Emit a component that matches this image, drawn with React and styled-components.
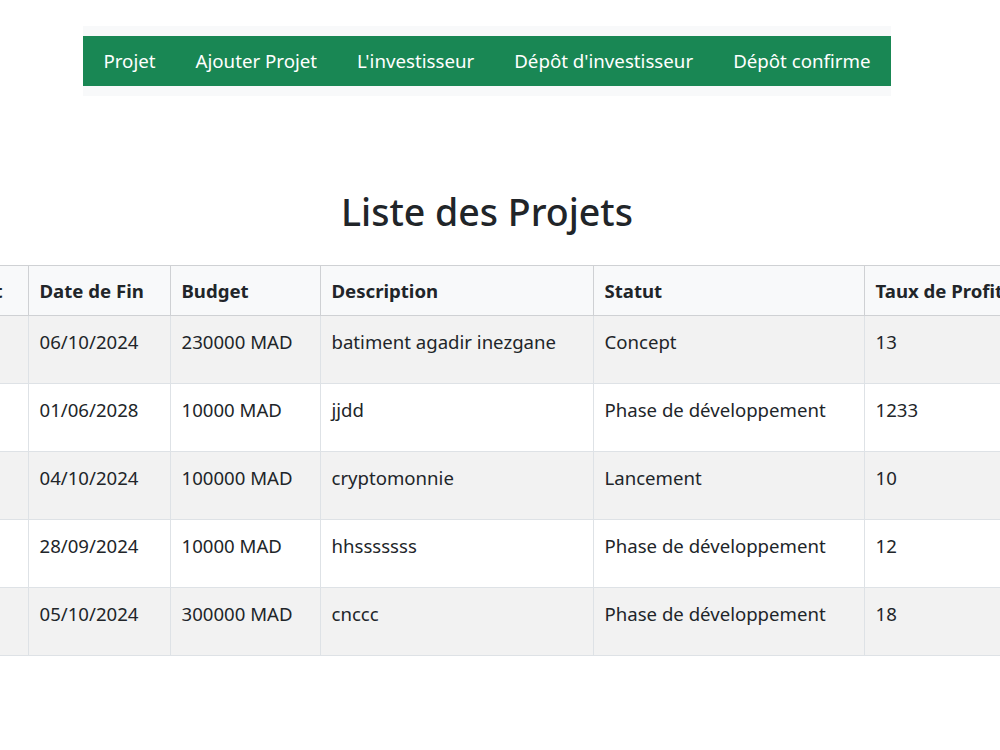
import React from 'react';
import styled, { createGlobalStyle } from 'styled-components';

const GlobalStyle = createGlobalStyle`
  body {
    margin: 0;
    background: #fff;
    font-family: "Noto Sans", "Open Sans", sans-serif;
    color: #212529;
  }
`;

const Page = styled.div`
  width: 1000px;
  overflow: hidden;
  padding-top: 26px;
`;

const NavWrap = styled.nav`
  display: flex;
  justify-content: center;
`;

const NavBar = styled.div`
  background: #f8f9fa;
  padding: 10px 0;
  margin-left: -26px;
`;

const NavList = styled.ul`
  display: flex;
  list-style: none;
  margin: 0;
  padding: 0;
  background: #198754;
  height: 50px;
  align-items: center;
`;

const NavItem = styled.li`
  padding: 0 20px;
  color: #fff;
  font-size: 18.7px;
  line-height: 50px;
  white-space: nowrap;
`;

const Title = styled.h1`
  margin: 88px 0 25px;
  text-align: center;
  font-size: 37.5px;
  font-weight: 500;
  line-height: 56px;
  padding-right: 26px;
`;

const TableWrap = styled.div`
  display: flex;
  justify-content: center;
`;

const Table = styled.table`
  flex: none;
  width: 1558px;
  border-collapse: collapse;
  table-layout: fixed;
  margin-left: -26px;
  font-size: 18.6px;
`;

const Th = styled.th`
  box-sizing: border-box;
  width: ${(p) => p.$w}px;
  height: 50px;
  padding: 0 11px;
  text-align: left;
  font-weight: 700;
  background: #f8f9fa;
  border: 1px solid #cfd1d4;
  white-space: nowrap;
  overflow: hidden;
`;

const Row = styled.tr`
  background: ${(p) => (p.$odd ? '#f2f2f2' : '#fff')};
`;

const Td = styled.td`
  height: 53px;
  padding: 14px 11px 0;
  vertical-align: top;
  line-height: 24px;
  border: 1px solid #dee2e6;
  white-space: nowrap;
  overflow: hidden;
`;

const columns = [
  ['Nom', 150],
  ['Date de Début', 170],
  ['Date de Fin', 142],
  ['Budget', 150],
  ['Description', 273],
  ['Statut', 271],
  ['Taux de Profit', 160],
  ['Actions', 242],
];

const projets = [
  ['agadir', '01/10/2024', '06/10/2024', '230000 MAD', 'batiment agadir inezgane', 'Concept', '13'],
  ['projet', '01/06/2024', '01/06/2028', '10000 MAD', 'jjdd', 'Phase de développement', '1233'],
  ['crypto', '01/10/2024', '04/10/2024', '100000 MAD', 'cryptomonnie', 'Lancement', '10'],
  ['hhs', '20/09/2024', '28/09/2024', '10000 MAD', 'hhsssssss', 'Phase de développement', '12'],
  ['cnc', '01/10/2024', '05/10/2024', '300000 MAD', 'cnccc', 'Phase de développement', '18'],
];

const liens = ['Projet', 'Ajouter Projet', "L'investisseur", "Dépôt d'investisseur", 'Dépôt confirme'];

export default function App() {
  return (
    <Page>
      <GlobalStyle />
      <NavWrap>
        <NavBar>
          <NavList>
            {liens.map((l) => (
              <NavItem key={l}>{l}</NavItem>
            ))}
          </NavList>
        </NavBar>
      </NavWrap>
      <Title>Liste des Projets</Title>
      <TableWrap>
        <Table>
          <thead>
            <tr>
              {columns.map(([name, w]) => (
                <Th key={name} $w={w}>{name}</Th>
              ))}
            </tr>
          </thead>
          <tbody>
            {projets.map((p, i) => (
              <Row key={i} $odd={i % 2 === 0}>
                {p.map((v, j) => (
                  <Td key={j}>{v}</Td>
                ))}
                <Td />
              </Row>
            ))}
          </tbody>
        </Table>
      </TableWrap>
    </Page>
  );
}
